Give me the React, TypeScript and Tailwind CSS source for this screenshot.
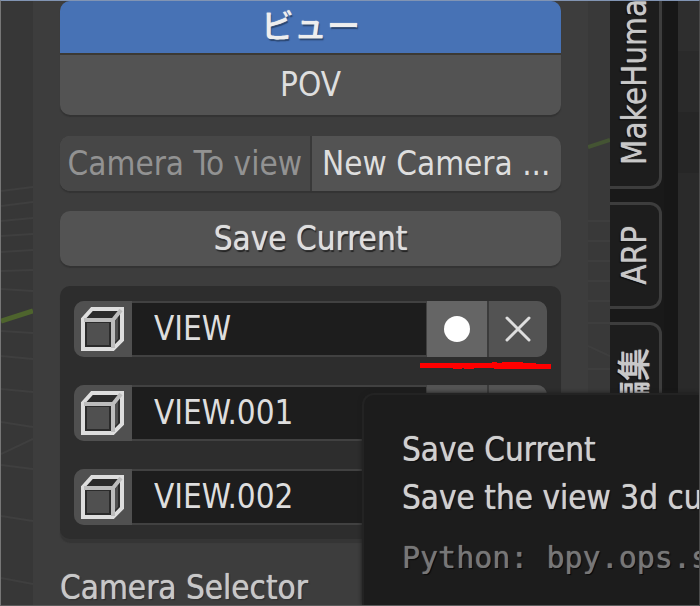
import React, { useState } from "react";

const sans = "font-['DejaVu_Sans_Condensed','DejaVu_Sans','Noto_Sans_CJK_JP',sans-serif]";
const button = "bg-[#535353] shadow-[0_2px_1px_#333333] [text-shadow:0_0_1px_currentColor,1px_2px_1px_#222222]";

const CubeIcon: React.FC = () => (
    <svg viewBox="0 0 46 46" className="size-[46px]" fill="none" aria-hidden="true">
        <path d="M3 14 14 3H42V35L34 43H3Z M7 17V39H29V17Z" fill="#2b2b2b" fillRule="evenodd" />
        <path d="M34 17V37L38 33V11Z" fill="#505050" />
        <path d="M3 13 12 3H42V34L33 43H3Z" stroke="#dedede" strokeWidth="4" />
        <path d="M4 14H33V42M33 14 41 4" stroke="#bdbdbd" strokeWidth="4" />
    </svg>
);

const CrossIcon: React.FC = () => (
    <svg viewBox="0 0 28 28" className="size-7" aria-hidden="true">
        <path d="M3 3 25 25M25 3 3 25" stroke="#dedede" strokeWidth="3" strokeLinecap="round" />
    </svg>
);

const ViewRow: React.FC<{ name: string; active?: boolean }> = ({ name, active }) => {
    const [value, setValue] = useState(name);

    return (
        <div className="flex h-14 overflow-hidden rounded-[10px] bg-[#414141] [text-shadow:0_0_1px_currentColor,1px_1px_1px_#000]">
            <button aria-label={`Select ${name}`} className="flex w-[58px] shrink-0 items-center justify-center bg-[#505050]">
                <CubeIcon />
            </button>
            <input
                aria-label="View name"
                value={value}
                onChange={(e) => setValue(e.target.value)}
                className="my-[2px] min-w-0 flex-1 bg-[#1d1d1d] px-[22px] text-[#dedede] outline-none"
            />
            <button
                aria-label={`Save ${name}`}
                className={`ml-px flex w-[60px] shrink-0 items-center justify-center ${active ? "bg-[#656565]" : "bg-[#535353]"}`}
            >
                <span className="size-[26px] rounded-full bg-white" />
            </button>
            <button aria-label={`Delete ${name}`} className="flex w-[60px] shrink-0 items-center justify-center border-l-2 border-[#3b3b3b] bg-[#535353]">
                <CrossIcon />
            </button>
        </div>
    );
};

const Tab: React.FC<{ label: string; className: string }> = ({ label, className }) => (
    <button className={`flex w-[52px] shrink-0 justify-center rounded-r-[12px] border-3 border-l-0 border-[#3d3d3d] bg-[#1d1d1d] text-[#c8c8c8] ${className}`}>
        <span className="rotate-180 leading-[38px] whitespace-nowrap [text-orientation:sideways] [text-shadow:0_0_1px_currentColor,-1px_-1px_1px_#000] [writing-mode:vertical-rl]">
            {label}
        </span>
    </button>
);

const App: React.FC = () => (
    <div className={`relative flex h-screen overflow-hidden border border-t-[#8194b3] border-r-[#4b4b4b] border-b-[#5b5b5b] border-l-[#777777] bg-[#393939] text-[33px] leading-9 text-[#dedede] ${sans}`}>
        <div className="w-8 shrink-0 bg-[#373737]">
            <svg viewBox="0 0 32 604" className="h-[604px] w-8" fill="none" aria-hidden="true">
                <path d="M0 190 32 186M0 205 32 201M0 220 32 217M0 235 32 233M0 251 32 249M0 270 32 269M0 288 32 290M0 330 32 332M0 355 32 358M0 388 32 391M0 421 32 426M0 464 32 468M0 515 32 520M0 577 32 583M0 453 32 438" stroke="#3f3f3f" strokeWidth="2" />
                <path d="M0 320 32 310" stroke="#4e642d" strokeWidth="5" />
            </svg>
        </div>

        <main className="min-w-0 flex-1 bg-[#3d3d3d] px-[27px]">
            <div className={`flex flex-col overflow-hidden rounded-[10px] ${button}`}>
                <button aria-pressed="true" className="h-[54px] border-b-2 border-[#3c3933] bg-[#4772b5] font-medium text-[#eeeeee] [text-shadow:0_0_1px_currentColor,1px_2px_1px_#28446f]">
                    ビュー
                </button>
                <button aria-pressed="false" className="h-[60px]">POV</button>
            </div>

            <div className={`mt-[21px] flex h-[55px] overflow-hidden rounded-[10px] ${button}`}>
                <button disabled className="flex-1 border-r-2 border-[#393939] bg-[#474747] whitespace-nowrap text-[#929292]">
                    Camera To view
                </button>
                <button className="flex-1 whitespace-nowrap">New Camera ...</button>
            </div>

            <button className={`mt-5 block h-[55px] w-full rounded-[10px] ${button}`}>Save Current</button>

            <div className="relative mt-5 flex flex-col gap-7 rounded-[10px] bg-[#2d2d2d] px-[14px] pt-[15px] pb-[14px] shadow-[0_4px_1px_#353535]">
                <ViewRow name="VIEW" active />
                <ViewRow name="VIEW.001" />
                <ViewRow name="VIEW.002" />
                <svg viewBox="0 0 131 8" className="absolute top-[76px] right-[10px] h-2 w-[131px]" aria-hidden="true">
                    <path d="M0 1H72V0H77V1H82V0H103V1H116V2H131V7H74V6H54V7H44V6H42V7H33V6H0Z" fill="#ff0000" />
                </svg>
            </div>

            <h2 className="mt-[31px] text-[#c8c8c8] [text-shadow:0_0_1px_currentColor,1px_1px_1px_#222222]">Camera Selector</h2>
        </main>

        <div className="w-[22px] shrink-0 bg-[#393939]">
            <svg viewBox="0 0 22 604" className="h-[604px] w-[22px]" fill="none" aria-hidden="true">
                <path d="M0 220H22M0 240H22M0 260H22M0 280H22M0 300H22M0 322H22M0 368H22M0 345 22 355" stroke="#3e3e3e" strokeWidth="2" />
                <path d="M0 146 22 139" stroke="#445433" strokeWidth="4" />
            </svg>
        </div>

        <nav aria-label="Sidebar tabs" className="flex w-[68px] shrink-0 flex-col gap-[13px] border-r-[14px] border-[#171717] bg-[#191919]">
            <Tab label="MakeHuman" className="h-[188px] items-end rounded-tr-none border-t-0 pb-[21px]" />
            <Tab label="ARP" className="h-[107px] items-center" />
            <Tab label="編集" className="h-[117px] items-center font-medium" />
        </nav>

        <aside className="w-[21px] shrink-0 bg-[#2a2a2a]">
            <div className="h-[50px] bg-[#2e2e2e]" />
            <div className="mt-[61px] h-[61px] bg-[#262626]" />
        </aside>

        <div
            role="tooltip"
            className="absolute top-[392px] right-0 bottom-0 left-[361px] overflow-hidden rounded-tl-[12px] border-t-2 border-l-2 border-[#232323] bg-[#1c1c1c] pt-[37px] pl-[38px] whitespace-nowrap text-[#d0d0d0] shadow-[0_0_4px_#1c1c1c] [text-shadow:0_0_1px_currentColor,1px_1px_1px_#000]"
        >
            <p>Save Current</p>
            <p className="mt-3">Save the view 3d cu</p>
            <p className="mt-6 font-['DejaVu_Sans_Mono',monospace] text-[30px] text-[#777777]">Python: bpy.ops.s</p>
        </div>
    </div>
);

export default App;
